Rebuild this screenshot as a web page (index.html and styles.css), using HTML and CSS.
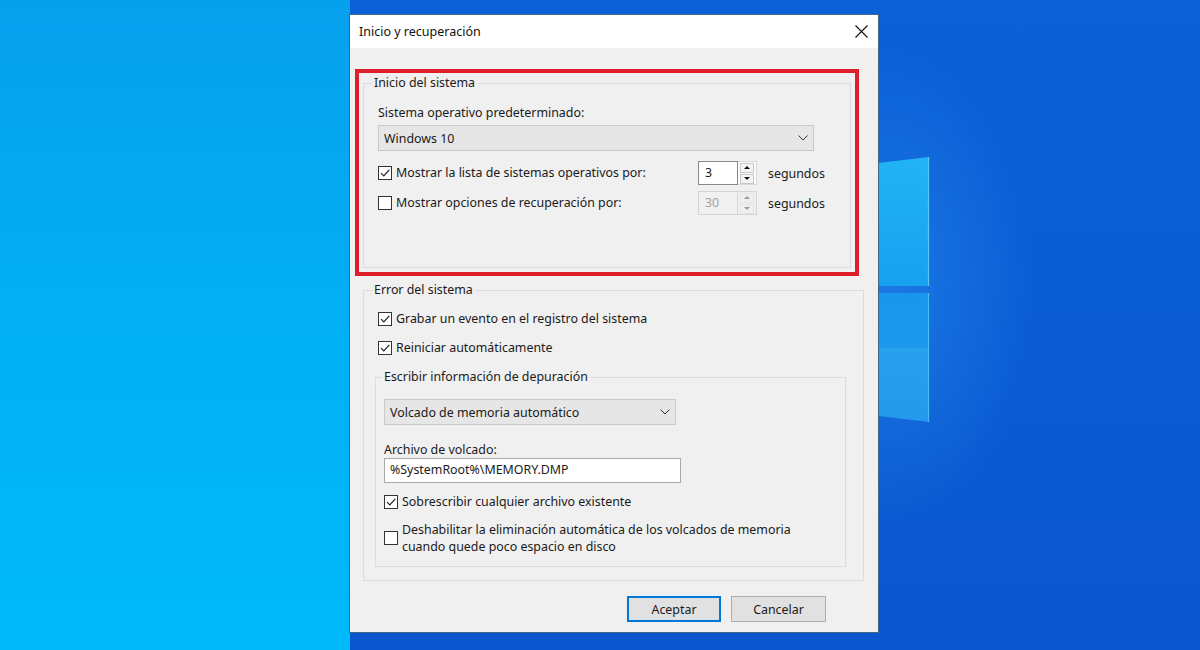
FILE: index.html
```html
<!DOCTYPE html>
<html lang="es">
<head>
<meta charset="utf-8">
<title>Inicio y recuperación</title>
<link rel="stylesheet" href="styles.css">
</head>
<body>
<div class="desktop">
  <svg class="winlogo" width="80" height="300" viewBox="0 0 80 300">
    <defs>
      <linearGradient id="pa" x1="0" y1="0" x2="0" y2="1">
        <stop offset="0" stop-color="#22b4f5"/>
        <stop offset="1" stop-color="#17a0ef"/>
      </linearGradient>
      <linearGradient id="pb" x1="0" y1="0" x2="0" y2="1">
        <stop offset="0" stop-color="#1a96ec"/>
        <stop offset="0.42" stop-color="#1c98ec"/>
        <stop offset="0.43" stop-color="#27a0ee"/>
        <stop offset="1" stop-color="#2499eb"/>
      </linearGradient>
    </defs>
    <polygon points="0,14 59,7 59,136 0,136" fill="url(#pa)"/>
    <polygon points="0,143 59,143 59,272 0,265" fill="url(#pb)"/>
    <line x1="58.5" y1="7" x2="58.5" y2="136" stroke="#56cbf8" stroke-width="1.2"/>
    <line x1="58.5" y1="143" x2="58.5" y2="272" stroke="#48bdf5" stroke-width="1.2"/>
  </svg>

  <div class="dialog">
    <div class="titlebar">
      <span class="title">Inicio y recuperación</span>
      <svg class="close" width="13" height="13" viewBox="0 0 13 13"><path d="M0.5 0.5 L12.5 12.5 M12.5 0.5 L0.5 12.5" stroke="#111" stroke-width="1.1" fill="none"/></svg>
    </div>
    <div class="content">
      <div class="highlight">
        <fieldset class="group g1">
          <legend>Inicio del sistema</legend>
          <div class="label">Sistema operativo predeterminado:</div>
          <div class="select sel1"><span>Windows 10</span><svg width="10" height="6" viewBox="0 0 10 6"><path d="M0.5 0.5 L5 5 L9.5 0.5" stroke="#333" stroke-width="1" fill="none"/></svg></div>
          <div class="timerow first">
            <div class="check"><span class="box checked"><svg width="12" height="12" viewBox="0 0 12 12"><path d="M2 6.2 L4.8 9 L10.3 2.8" stroke="#222" stroke-width="1.2" fill="none"/></svg></span><span>Mostrar la lista de sistemas operativos por:</span></div>
            <div class="spin">
              <div class="spin-val">3</div>
              <div class="spin-btns"><span class="sb"><i class="up"></i></span><span class="sb"><i class="down"></i></span></div>
            </div>
            <span class="unit">segundos</span>
          </div>
          <div class="timerow second">
            <div class="check"><span class="box"></span><span>Mostrar opciones de recuperación por:</span></div>
            <div class="spin disabled">
              <div class="spin-val">30</div>
              <div class="spin-btns"><span class="sb"><i class="up"></i></span><span class="sb"><i class="down"></i></span></div>
            </div>
            <span class="unit">segundos</span>
          </div>
        </fieldset>
      </div>

      <fieldset class="group g2">
        <legend>Error del sistema</legend>
        <div class="check row-a"><span class="box checked"><svg width="12" height="12" viewBox="0 0 12 12"><path d="M2 6.2 L4.8 9 L10.3 2.8" stroke="#222" stroke-width="1.2" fill="none"/></svg></span><span>Grabar un evento en el registro del sistema</span></div>
        <div class="check row-b"><span class="box checked"><svg width="12" height="12" viewBox="0 0 12 12"><path d="M2 6.2 L4.8 9 L10.3 2.8" stroke="#222" stroke-width="1.2" fill="none"/></svg></span><span>Reiniciar automáticamente</span></div>

        <fieldset class="group g3">
          <legend>Escribir información de depuración</legend>
          <div class="select sel2"><span>Volcado de memoria automático</span><svg width="10" height="6" viewBox="0 0 10 6"><path d="M0.5 0.5 L5 5 L9.5 0.5" stroke="#333" stroke-width="1" fill="none"/></svg></div>
          <div class="label lab2">Archivo de volcado:</div>
          <div class="textbox">%SystemRoot%\MEMORY.DMP</div>
          <div class="check row-c"><span class="box checked"><svg width="12" height="12" viewBox="0 0 12 12"><path d="M2 6.2 L4.8 9 L10.3 2.8" stroke="#222" stroke-width="1.2" fill="none"/></svg></span><span>Sobrescribir cualquier archivo existente</span></div>
          <div class="check row-d"><span class="box"></span><span class="two">Deshabilitar la eliminación automática de los volcados de memoria<br>cuando quede poco espacio en disco</span></div>
        </fieldset>
      </fieldset>

      <div class="buttons">
        <button class="btn default">Aceptar</button>
        <button class="btn">Cancelar</button>
      </div>
    </div>
  </div>
</div>
</body>
</html>
```

FILE: styles.css
```css
* { box-sizing: border-box; }
html, body { margin: 0; padding: 0; }
body {
  width: 1200px;
  height: 650px;
  overflow: hidden;
  font-family: "Noto Sans", "Open Sans", sans-serif;
  font-size: 12.4px;
  color: #1a1a1a;
}
.desktop {
  position: relative;
  width: 1200px;
  height: 650px;
  background:
    linear-gradient(180deg, #07a0ee 0%, #02aef4 45%, #00baf9 100%) 0 0 / 350px 650px no-repeat,
    radial-gradient(ellipse 150px 240px at 885px 290px, rgba(45,150,240,0.5), rgba(45,150,240,0) 100%),
    linear-gradient(180deg, #0b60d8 0%, #0a5bd4 60%, #0b56ce 100%);
}
.winlogo {
  position: absolute;
  left: 870px;
  top: 150px;
}
.dialog {
  position: absolute;
  left: 349px;
  top: 14px;
  width: 530px;
  height: 619px;
  border: 1px solid #3f6788;
  background: #f0f0f0;
  display: flex;
  flex-direction: column;
}
.titlebar {
  height: 33px;
  background: #ffffff;
  display: flex;
  align-items: center;
  justify-content: space-between;
  padding: 0 10px 0 9px;
  font-size: 12.5px;
  color: #111;
}
.close { display: block; }

.content { display: flex; flex-direction: column; }

.highlight {
  margin: 21px 0 0 5px;
  width: 504px;
  height: 207px;
  border: 4px solid #dc1f2b;
  padding: 2px 4px 0 4px;
}

fieldset.group {
  margin: 0;
  border: 1px solid #dcdcdc;
  min-width: 0;
}
legend {
  padding: 0 2px;
  line-height: 16px;
  font-size: 12.4px;
}
fieldset.g1 {
  height: 193px;
  padding: 14px 13px 0 14px;
}
.g1 legend { margin-left: -6px; }

.label { line-height: 16px; }
.select {
  display: flex;
  align-items: center;
  justify-content: space-between;
  height: 26px;
  background: #e6e6e6;
  border: 1px solid #c9c9c9;
  padding: 0 5px 0 5px;
}
.sel1 { width: 436px; margin-top: 4px; }
.sel2 { width: 292px; }

.check {
  display: flex;
  align-items: center;
  gap: 4px;
  line-height: 16px;
}
.box {
  width: 14px;
  height: 14px;
  border: 1px solid #333;
  background: #fff;
  flex: none;
  display: flex;
  align-items: center;
  justify-content: center;
}
.box svg { display: block; }

.timerow {
  display: grid;
  grid-template-columns: 309px 59px auto;
  column-gap: 11px;
  align-items: center;
  height: 24px;
}
.timerow.first { margin-top: 10px; }
.timerow.second { margin-top: 6px; }

.spin {
  display: flex;
  height: 24px;
  width: 59px;
}
.spin-val {
  width: 40px;
  background: #fff;
  border: 1px solid #8a8a8a;
  padding-left: 6px;
  line-height: 21px;
}
.spin-btns {
  width: 19px;
  display: flex;
  flex-direction: column;
  justify-content: center;
  gap: 1px;
  padding: 0 2px;
  border: 1px solid #d9d9d9;
  border-left: none;
  background: #fbfbfb;
}
.sb {
  height: 10px;
  border: 1px solid #c8c8c8;
  background: #f4f4f4;
  display: flex;
  align-items: center;
  justify-content: center;
}
.sb i { width: 0; height: 0; border-left: 3px solid transparent; border-right: 3px solid transparent; }
.sb i.up { border-bottom: 3px solid #111; }
.sb i.down { border-top: 3px solid #111; }
.spin.disabled .spin-val { background: #f0f0f0; border-color: #d5d5d5; color: #a3a3a3; }
.spin.disabled .spin-btns { background: #f0f0f0; border-color: #d5d5d5; }
.spin.disabled .sb { border-color: #e3e3e3; background: #f0f0f0; }
.spin.disabled .sb i.up { border-bottom-color: #9a9a9a; }
.spin.disabled .sb i.down { border-top-color: #9a9a9a; }

fieldset.g2 {
  margin: 6px 14px 0 13px;
  padding: 13px 16px 13px 11px;
}
.g2 legend { margin-left: -3px; }
.row-a { padding-left: 3px; }
.row-b { padding-left: 3px; margin-top: 13px; }

fieldset.g3 {
  margin: 13px 1px 0 0;
  padding: 14px 8px 11px 8px;
}
.g3 legend { margin-left: -2px; }
.lab2 { margin-top: 17px; }
.textbox {
  width: 297px;
  height: 25px;
  background: #fff;
  border: 1px solid #a9a9a9;
  padding-left: 5px;
  line-height: 22px;
}
.row-c { margin-top: 11px; }
.row-d { margin-top: 11px; }
.two { line-height: 17px; }

.buttons {
  display: flex;
  justify-content: flex-end;
  gap: 10px;
  margin-top: 15px;
  padding-right: 52px;
}
.btn {
  font-family: "Noto Sans", "Open Sans", sans-serif;
  font-size: 12.4px;
  color: #1a1a1a;
  width: 95px;
  height: 26px;
  background: #e1e1e1;
  border: 1px solid #adadad;
  padding: 0;
}
.btn.default {
  width: 94px;
  border: 2px solid #0078d7;
}
```
